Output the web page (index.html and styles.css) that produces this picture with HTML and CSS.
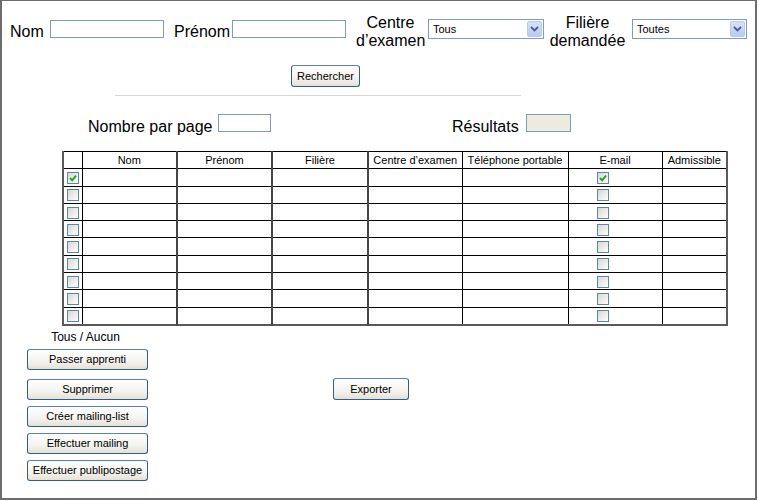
FILE: index.html
```html
<!DOCTYPE html>
<html lang="fr">
<head>
<meta charset="utf-8">
<title>Recherche candidats</title>
<link rel="stylesheet" href="styles.css">
</head>
<body>
<div class="frame">
  <div class="search-row">
    <span class="lbl lbl-nom">Nom</span>
    <input class="textbox tb-name" type="text">
    <span class="lbl lbl-prenom">Prénom</span>
    <input class="textbox tb-name tb-prenom" type="text">
    <span class="lbl lbl-two lbl-centre">Centre<br>d’examen</span>
    <div class="select sel-centre">
      <span class="select-value">Tous</span>
      <span class="select-arrow"><svg width="9" height="6" viewBox="0 0 9 6"><polyline points="1,1 4.5,4.5 8,1" fill="none" stroke="#4b5f86" stroke-width="1.8"/></svg></span>
    </div>
    <span class="lbl lbl-two lbl-filiere">Filière<br>demandée</span>
    <div class="select sel-filiere">
      <span class="select-value">Toutes</span>
      <span class="select-arrow"><svg width="9" height="6" viewBox="0 0 9 6"><polyline points="1,1 4.5,4.5 8,1" fill="none" stroke="#4b5f86" stroke-width="1.8"/></svg></span>
    </div>
  </div>

  <div class="search-action">
    <button class="btn btn-search">Rechercher</button>
  </div>

  <div class="sep"></div>

  <div class="meta-row">
    <span class="lbl lbl-nbpage">Nombre par page</span>
    <input class="textbox tb-nbpage" type="text">
    <span class="lbl lbl-res">Résultats</span>
    <input class="textbox tb-res" type="text" readonly>
  </div>

  <table class="grid">
    <colgroup>
      <col class="w-chk"><col class="w-nom"><col class="w-prenom"><col class="w-filiere"><col class="w-centre"><col class="w-tel"><col class="w-mail"><col class="w-adm">
    </colgroup>
    <thead>
      <tr>
        <th></th><th>Nom</th><th class="vsep">Prénom</th><th class="vsep">Filière</th><th class="vsep">Centre d’examen</th><th>Téléphone portable</th><th>E-mail</th><th>Admissible</th>
      </tr>
    </thead>
    <tbody>
      <tr>
        <td class="cell-chk"><span class="chk"><svg width="10" height="10" viewBox="0 0 10 10"><polyline points="2,5 4.2,7.4 8,2.6" fill="none" stroke="#21a51f" stroke-width="1.9"/></svg></span></td>
        <td></td><td class="vsep"></td><td class="vsep"></td><td class="vsep"></td><td></td>
        <td class="cell-mail"><span class="chk"><svg width="10" height="10" viewBox="0 0 10 10"><polyline points="2,5 4.2,7.4 8,2.6" fill="none" stroke="#21a51f" stroke-width="1.9"/></svg></span></td>
        <td></td>
      </tr>
      <tr><td class="cell-chk"><span class="chk"></span></td><td></td><td class="vsep"></td><td class="vsep"></td><td class="vsep"></td><td></td><td class="cell-mail"><span class="chk"></span></td><td></td></tr>
      <tr><td class="cell-chk"><span class="chk"></span></td><td></td><td class="vsep"></td><td class="vsep"></td><td class="vsep"></td><td></td><td class="cell-mail"><span class="chk"></span></td><td></td></tr>
      <tr><td class="cell-chk"><span class="chk"></span></td><td></td><td class="vsep"></td><td class="vsep"></td><td class="vsep"></td><td></td><td class="cell-mail"><span class="chk"></span></td><td></td></tr>
      <tr><td class="cell-chk"><span class="chk"></span></td><td></td><td class="vsep"></td><td class="vsep"></td><td class="vsep"></td><td></td><td class="cell-mail"><span class="chk"></span></td><td></td></tr>
      <tr><td class="cell-chk"><span class="chk"></span></td><td></td><td class="vsep"></td><td class="vsep"></td><td class="vsep"></td><td></td><td class="cell-mail"><span class="chk"></span></td><td></td></tr>
      <tr><td class="cell-chk"><span class="chk"></span></td><td></td><td class="vsep"></td><td class="vsep"></td><td class="vsep"></td><td></td><td class="cell-mail"><span class="chk"></span></td><td></td></tr>
      <tr><td class="cell-chk"><span class="chk"></span></td><td></td><td class="vsep"></td><td class="vsep"></td><td class="vsep"></td><td></td><td class="cell-mail"><span class="chk"></span></td><td></td></tr>
      <tr><td class="cell-chk"><span class="chk"></span></td><td></td><td class="vsep"></td><td class="vsep"></td><td class="vsep"></td><td></td><td class="cell-mail"><span class="chk"></span></td><td></td></tr>
    </tbody>
  </table>

  <div class="bottom">
    <div class="actions">
      <span class="all-none">Tous / Aucun</span>
      <button class="btn btn-action">Passer apprenti</button>
      <button class="btn btn-action btn-second">Supprimer</button>
      <button class="btn btn-action">Créer mailing-list</button>
      <button class="btn btn-action">Effectuer mailing</button>
      <button class="btn btn-action btn-last">Effectuer publipostage</button>
    </div>
    <button class="btn btn-export">Exporter</button>
  </div>
</div>
</body>
</html>
```

FILE: styles.css
```css
html, body {
  margin: 0;
  padding: 0;
  background: #ffffff;
}

body {
  font-family: "Liberation Sans", Arial, sans-serif;
  color: #000;
}

.frame {
  width: 757px;
  height: 500px;
  box-sizing: border-box;
  border-style: solid;
  border-color: #6d6d6d;
  border-width: 1px 2px 2px 2px;
  display: flex;
  flex-direction: column;
  align-items: flex-start;
}

/* ---------- labels & fields ---------- */
.lbl {
  font-size: 16px;
  line-height: 18px;
  white-space: nowrap;
}

.textbox {
  box-sizing: border-box;
  height: 18px;
  border: 1px solid #7f9db9;
  background: #fff;
  padding: 0;
  margin: 0;
  outline: none;
}

/* ---------- search row ---------- */
.search-row {
  display: flex;
  align-items: center;
  height: 36px;
  margin-top: 13px;
  padding-left: 8px;
}

.lbl-nom { width: 40px; }
.tb-name { width: 114px; align-self: flex-start; margin-top: 6px; }
.lbl-prenom { width: 58px; margin-left: 10px; }

.lbl-two { text-align: center; }
.lbl-centre { width: 69px; margin-left: 10px; }
.lbl-filiere { width: 77px; margin-left: 5px; }

.select {
  box-sizing: border-box;
  height: 20px;
  border: 1px solid #7f9db9;
  background: #fff;
  display: flex;
  align-items: center;
  justify-content: space-between;
  align-self: flex-start;
  margin-top: 5px;
  padding: 1px;
}
.sel-centre { width: 116px; margin-left: 3px; }
.sel-filiere { width: 115px; margin-left: 6px; }

.select-value {
  font-size: 11px;
  padding-left: 3px;
}

.select-arrow {
  width: 15px;
  height: 16px;
  box-sizing: border-box;
  border: 1px solid #b9c9ef;
  border-radius: 2px;
  background: linear-gradient(#d6e1fc, #b7caf4);
  display: flex;
  align-items: center;
  justify-content: center;
}

/* ---------- buttons ---------- */
.btn {
  box-sizing: border-box;
  font-family: "Liberation Sans", Arial, sans-serif;
  font-size: 11px;
  color: #000;
  border: 1px solid #2f5d8e;
  border-top-color: #5b82ad;
  border-radius: 3px;
  background: linear-gradient(#fefefd 0%, #f4f3ee 60%, #e4e1d6 100%);
  padding: 0;
  margin: 0;
}

.search-action {
  margin-top: 15px;
  padding-left: 289px;
}
.btn-search { width: 69px; height: 22px; }

.sep {
  margin-top: 8px;
  margin-left: 113px;
  width: 406px;
  height: 1px;
  background: #d9d6cd;
}

/* ---------- meta row ---------- */
.meta-row {
  display: flex;
  align-items: flex-start;
  margin-top: 18px;
  padding-left: 86px;
}
.meta-row .lbl { margin-top: 4px; }
.lbl-nbpage { width: 130px; }
.tb-nbpage { width: 53px; }
.lbl-res { width: 74px; margin-left: 181px; }
.tb-res { width: 45px; background: #edeae0; }

/* ---------- grid ---------- */
.grid {
  border-collapse: collapse;
  table-layout: fixed;
  width: 664px;
  margin-top: 15px;
  margin-left: 60px;
  font-size: 11px;
  border-left: 2px solid #5a5a5a;
  border-right: 2px solid #5a5a5a;
  border-bottom: 2px solid #5a5a5a;
}
.w-chk { width: 19px; }
.w-nom { width: 95px; }
.w-prenom { width: 95px; }
.w-filiere { width: 96px; }
.w-centre { width: 94px; }
.w-tel { width: 106px; }
.w-mail { width: 94px; }
.w-adm { width: 65px; }

.grid th,
.grid td {
  border: 1px solid #000;
  padding: 0;
  height: 16px;
  font-weight: normal;
  text-align: center;
  white-space: nowrap;
  vertical-align: middle;
}
.grid .vsep { border-left: 2px solid #454545; }
.grid tr { height: 17.3px; }

.grid td.cell-chk { text-align: left; padding-left: 3px; }
.grid td.cell-mail { text-align: left; padding-left: 28px; }

.chk {
  display: inline-flex;
  align-items: center;
  justify-content: center;
  box-sizing: border-box;
  width: 12px;
  height: 12px;
  border: 1px solid #5f84ab;
  background: linear-gradient(135deg, #d9d9d3 0%, #f2f2ef 70%, #ffffff 100%);
  vertical-align: middle;
}

/* ---------- bottom ---------- */
.bottom {
  display: flex;
  align-items: flex-start;
  margin-top: 4px;
  padding-left: 25px;
}

.actions {
  display: flex;
  flex-direction: column;
  align-items: center;
  width: 121px;
  gap: 6px;
}

.all-none {
  font-size: 12px;
  line-height: 14px;
  margin-bottom: -1px;
  margin-right: 4px;
}

.btn-action { width: 121px; height: 21px; }
.btn-second { margin-top: 3px; }

.btn-export {
  width: 76px;
  height: 22px;
  margin-left: 185px;
  margin-top: 48px;
}
```
